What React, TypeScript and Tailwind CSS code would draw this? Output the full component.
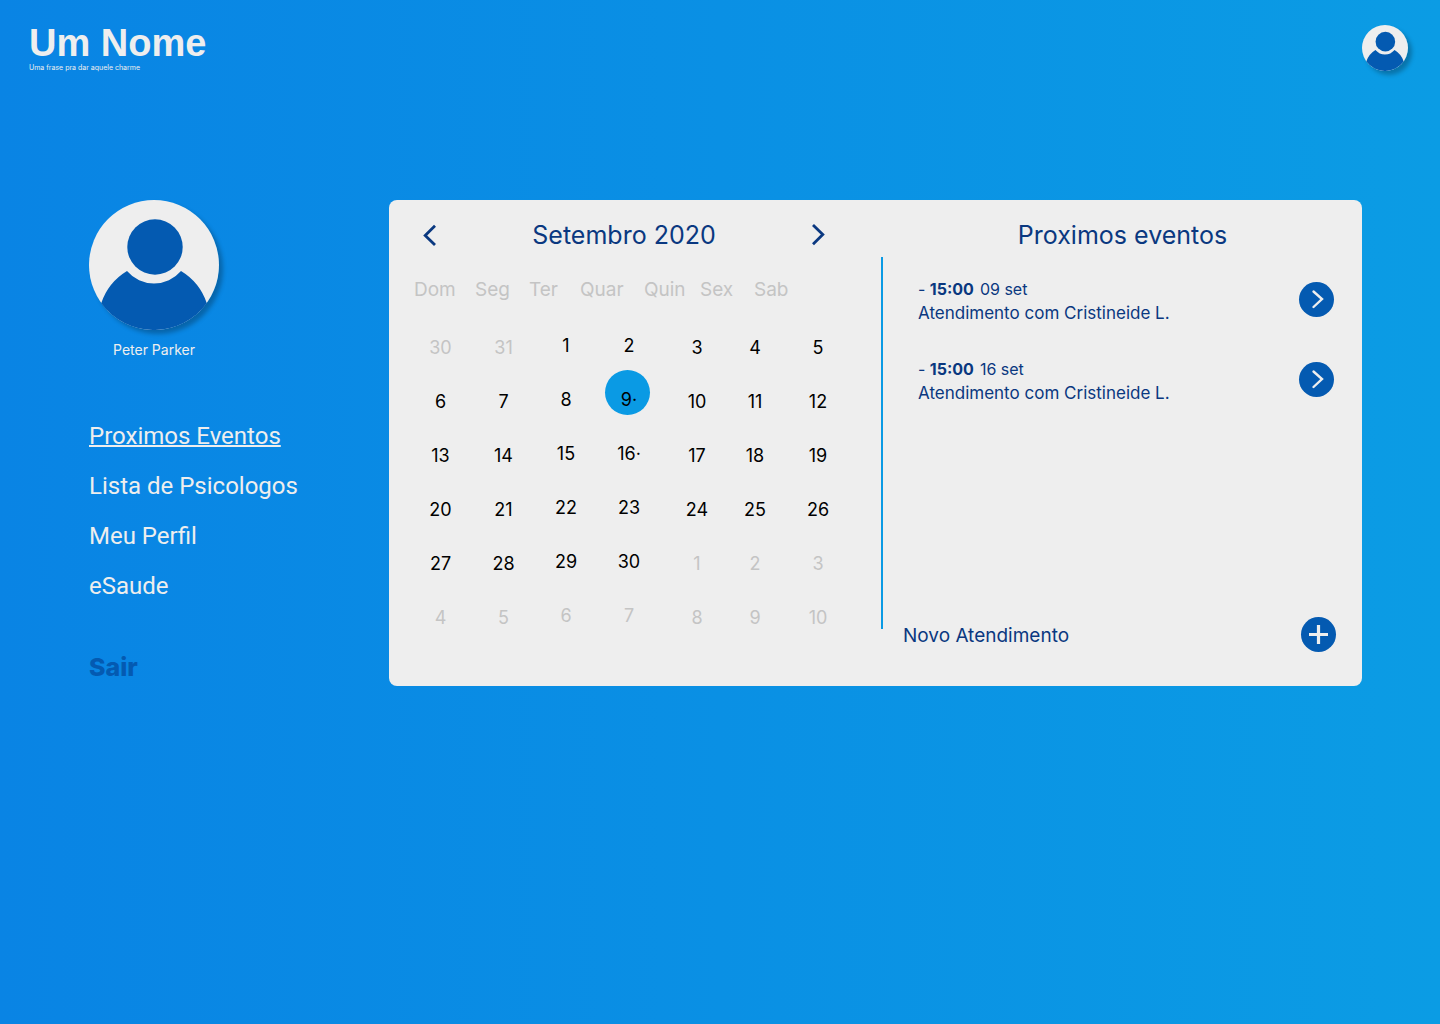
import React from "react";

const WEEKDAYS = ["Dom", "Seg", "Ter", "Quar", "Quin", "Sex", "Sab"];

type Day = { n: number; out?: boolean; event?: boolean; today?: boolean };

const DAYS: Day[] = [
  { n: 30, out: true },
  { n: 31, out: true },
  ...Array.from({ length: 30 }, (_, i) => ({
    n: i + 1,
    event: i + 1 === 9 || i + 1 === 16,
    today: i + 1 === 9,
  })),
  ...Array.from({ length: 10 }, (_, i) => ({ n: i + 1, out: true })),
];

const WEEKS = Array.from({ length: 6 }, (_, w) => DAYS.slice(w * 7, w * 7 + 7));

const EVENTS = [
  { time: "15:00", date: "09 set", title: "Atendimento com Cristineide L." },
  { time: "15:00", date: "16 set", title: "Atendimento com Cristineide L." },
];

const LINKS = ["Proximos Eventos", "Lista de Psicologos", "Meu Perfil", "eSaude"];

function Avatar({ className }: { className: string }) {
  return (
    <svg viewBox="0 0 130 130" className={className} aria-hidden="true">
      <circle cx="65" cy="65" r="65" fill="#eeeeee" />
      <circle cx="66" cy="47" r="27.7" fill="#045ab1" />
      <path
        d="M12.2 103.2 A60 60 0 0 1 38 71 A35.4 35.4 0 0 0 92 71 A60 60 0 0 1 117.8 103.2 A65.4 65.4 0 0 1 12.2 103.2 Z"
        fill="#045ab1"
      />
    </svg>
  );
}

function Chevron({ left }: { left?: boolean }) {
  return (
    <svg viewBox="0 0 13 22" className="h-[22px] w-[13px]" fill="none" stroke="currentColor" strokeWidth="2.8" aria-hidden="true">
      <path d={left ? "M12 1.8 L2.2 11.4 L12 21" : "M1 1 L10.8 10.6 L1 20.2"} />
    </svg>
  );
}

function Calendar() {
  return (
    <section className="min-w-0 flex-[492]" aria-label="Calendario">
      <div className="flex h-[70px] items-center justify-between pr-[56px] pl-[34px] text-[#0a3880]">
        <button type="button" aria-label="Mes anterior">
          <Chevron left />
        </button>
        <h2 className="pt-0.5 text-[25px]">Setembro 2020</h2>
        <button type="button" aria-label="Proximo mes">
          <Chevron />
        </button>
      </div>
      <table className="block pr-[22px] pl-5 text-lg leading-[54px]">
        <thead className="block text-[#c4c4c4]">
          <tr className="grid grid-cols-[61fr_54fr_51fr_64fr_56fr_54fr_105fr] pt-[5px] pl-[5px] text-[19px] leading-[30px]">
            {WEEKDAYS.map((d) => (
              <th key={d} scope="col" className="text-left font-normal">
                {d}
              </th>
            ))}
          </tr>
        </thead>
        <tbody className="block pt-4">
          {WEEKS.map((week, w) => (
            <tr key={w} className="grid grid-cols-[63fr_63fr_62fr_64fr_72fr_44fr_82fr]">
              {week.map((day, i) => (
                <td
                  key={i}
                  className={`relative h-[54px] text-center ${i === 2 || i === 3 ? "leading-[50px]" : ""} ${
                    day.out ? "text-[#c4c4c4]" : "text-black"
                  }`}
                >
                  {day.today && (
                    <span className="absolute top-[-5px] left-[8px] size-[45px] rounded-full bg-[#0a9ae4]" />
                  )}
                  <button type="button" className="relative">
                    {day.n}
                    {day.event && "·"}
                  </button>
                </td>
              ))}
            </tr>
          ))}
        </tbody>
      </table>
    </section>
  );
}

function Events() {
  return (
    <section className="flex min-w-0 flex-[479] flex-col text-[#0a3880]">
      <h2 className="flex h-[70px] items-center justify-center pt-0.5 text-[25px]">Proximos eventos</h2>
      <ul className="flex flex-col gap-8 pt-[7px] pr-7 pl-[35px]">
        {EVENTS.map((e) => (
          <li key={e.date} className="flex items-start justify-between">
            <div className="leading-6">
              <p>
                - <strong className="font-bold">{e.time}</strong>
                <span className="ml-1.5">{e.date}</span>
              </p>
              <p className="text-[17px]">{e.title}</p>
            </div>
            <button
              type="button"
              aria-label={`Abrir ${e.date}`}
              className="mt-[5px] flex size-[35px] items-center justify-center rounded-full bg-[#045ab1] text-[#eeeeee]"
            >
              <svg viewBox="0 0 35 35" className="size-[35px]" fill="none" stroke="currentColor" strokeWidth="2.4" strokeLinecap="round" aria-hidden="true">
                <path d="M14.5 9.5 L23 17 L14.5 25" />
              </svg>
            </button>
          </li>
        ))}
      </ul>
      <div className="mt-auto flex items-center justify-between pr-[26px] pb-[34px] pl-5">
        <span id="novo" className="pt-1 text-[19px]">
          Novo Atendimento
        </span>
        <button
          type="button"
          aria-labelledby="novo"
          className="flex size-[35px] items-center justify-center rounded-full bg-[#045ab1] text-[#eeeeee]"
        >
          <svg viewBox="0 0 35 35" className="size-[35px]" fill="none" stroke="currentColor" strokeWidth="3.2" aria-hidden="true">
            <path d="M17.5 8 V27 M8 17.5 H27" />
          </svg>
        </button>
      </div>
    </section>
  );
}

export default function App() {
  return (
    <div className="min-h-screen bg-linear-[90deg] from-[#0984e4] to-[#0b9ce4] font-['Inter',sans-serif] text-[#eeeeee]">
      <header className="flex items-start justify-between pt-[25px] pr-8 pl-[29px]">
        <div>
          <h1 className="font-['Liberation_Sans',sans-serif] text-[38px] leading-[37px] font-bold">Um Nome</h1>
          <p className="pt-0.5 text-[7px] leading-2">Uma frase pra dar aquele charme</p>
        </div>
        <button type="button" aria-label="Perfil" className="rounded-full shadow-[4px_4px_4px_rgba(0,0,0,0.25)]">
          <Avatar className="size-[46px]" />
        </button>
      </header>
      <main className="flex items-start pt-32 pr-[78px] pl-[89px]">
        <aside className="w-[300px] shrink-0">
          <div className="flex w-[130px] flex-col items-center">
            <div className="rounded-full shadow-[4px_4px_4px_rgba(0,0,0,0.25)]">
              <Avatar className="size-[130px]" />
            </div>
            <p className="mt-2.5 text-sm">Peter Parker</p>
          </div>
          <nav className="mt-[51px] flex flex-col items-start font-['Roboto',sans-serif] text-2xl leading-[50px]">
            {LINKS.map((l, i) => (
              <a key={l} href="#" className={i === 0 ? "underline decoration-2" : ""}>
                {l}
              </a>
            ))}
          </nav>
          <button type="button" className="mt-[38px] text-[25px] font-extrabold text-[#045ab1]">
            Sair
          </button>
        </aside>
        <div className="flex min-h-[486px] min-w-0 flex-1 rounded-lg bg-[#eeeeee]">
          <Calendar />
          <div className="my-[57px] w-0.5 bg-[#0a9ae4]" />
          <Events />
        </div>
      </main>
    </div>
  );
}
